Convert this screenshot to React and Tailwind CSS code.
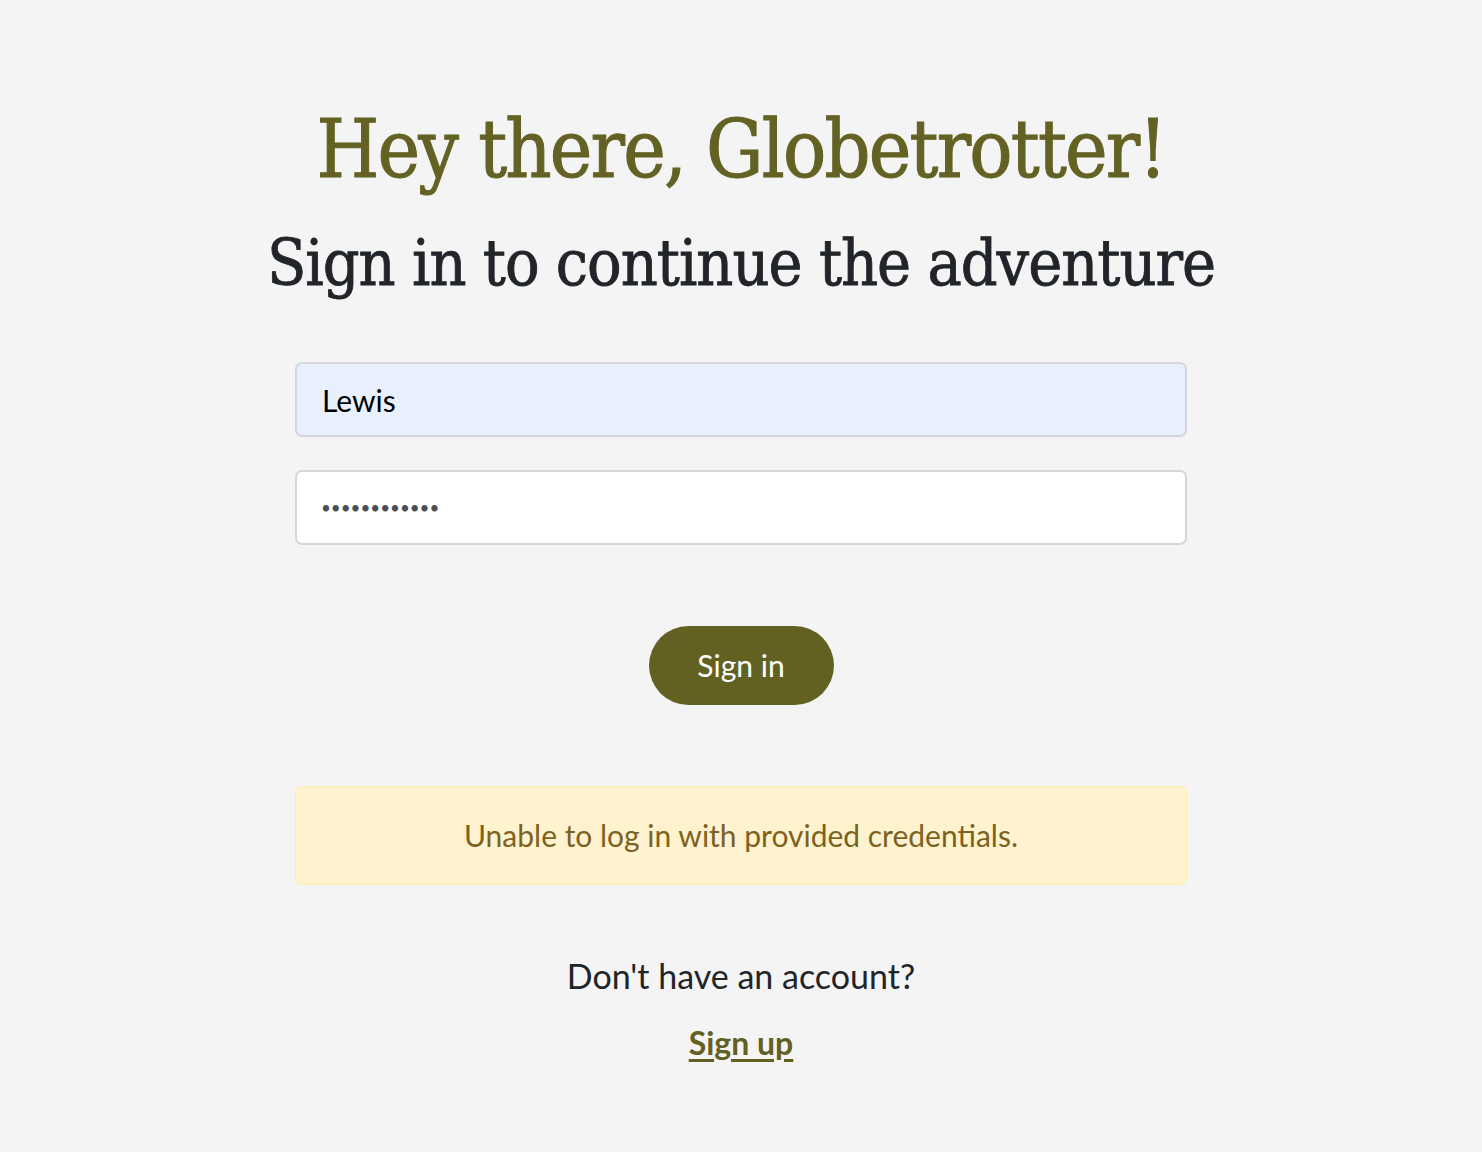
import React from 'react';

const serif = "font-['DejaVu_Serif_Condensed','DejaVu_Serif',serif]";
const sans = "font-['Lato','Liberation_Sans',sans-serif]";

const App = () => {
  return (
    <div className={`min-h-screen bg-[#f4f4f4] ${sans}`}>
      <div className="mx-auto w-[892px] pt-[102px] flex flex-col items-center">
        {/* Headings */}
        <h1 className={`${serif} text-[80px] leading-[96px] text-[#636224] tracking-[-1.8px] whitespace-nowrap [-webkit-text-stroke:1px_#636224]`}>
          Hey there, Globetrotter!
        </h1>
        <h2 className={`${serif} text-[64px] leading-[80px] mt-[25px] text-[#212529] tracking-[-1px] whitespace-nowrap [-webkit-text-stroke:0.8px_#212529]`}>
          Sign in to continue the adventure
        </h2>

        {/* Form */}
        <form className="w-full mt-[59px] flex flex-col" onSubmit={(e) => e.preventDefault()}>
          <input
            type="text"
            defaultValue="Lewis"
            className="w-full h-[75px] px-[25px] rounded-[7px] border-2 border-[#d3d6da] bg-[#e8f0fe] text-[30px] text-black outline-none"
          />
          <input
            type="password"
            defaultValue="globetrotter"
            className="w-full h-[75px] mt-[33px] px-[24px] rounded-[7px] border-2 border-[#d3d6da] bg-white text-[17px] text-[#495057] outline-none"
          />
          <div className="flex justify-center mt-[81px]">
            <button
              type="submit"
              className="w-[185px] h-[79px] rounded-full bg-[#636122] text-white text-[30px]"
            >
              Sign in
            </button>
          </div>
        </form>

        {/* Error */}
        <div className="w-full mt-[81px] h-[99px] flex items-center justify-center rounded-[6px] border border-[#ffecb5] bg-[#fff3cf] text-[30px] text-[#7d611f]">
          Unable to log in with provided credentials.
        </div>

        {/* Sign up */}
        <p className="mt-[65px] text-[34px] text-[#212529]">Don't have an account?</p>
        <a href="#" className="mt-[18px] text-[32px] font-bold text-[#636122] underline underline-offset-4">
          Sign up
        </a>
      </div>
    </div>
  );
};

export default App;
